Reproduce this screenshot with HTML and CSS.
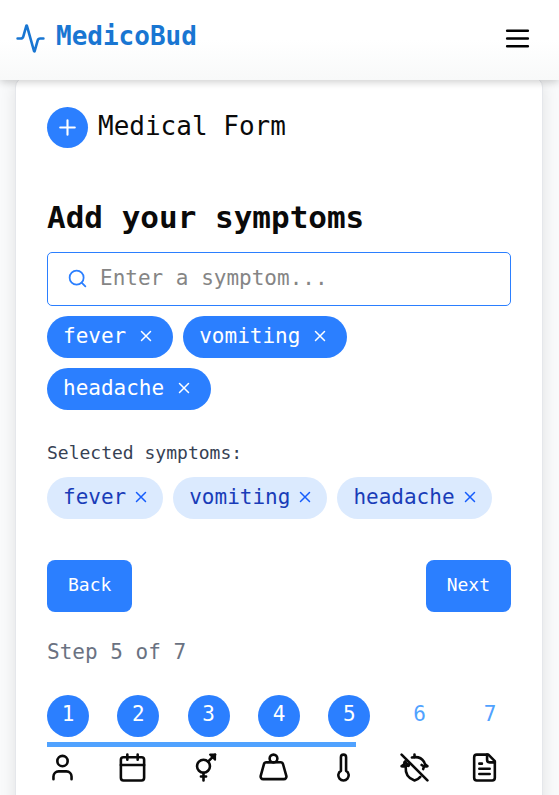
FILE: index.html
```html
<!DOCTYPE html>
<html lang="en">
<head>
<meta charset="utf-8">
<meta name="viewport" content="width=device-width, initial-scale=1">
<title>MedicoBud</title>
<link rel="stylesheet" href="styles.css">
</head>
<body>
<header class="topbar">
  <a class="brand" href="#">
    <svg class="icon brand-icon" viewBox="0 0 24 24" aria-hidden="true"><path d="M22 12h-2.500a2 2 0 0 0-1.930 1.460l-2.350 8.360a.25.25 0 0 1-.48 0L9.240 2.180a.25.25 0 0 0-.48 0l-2.350 8.360A2 2 0 0 1 4.490 12H2"/></svg>
    <span>MedicoBud</span>
  </a>
  <button class="menu-button" type="button" aria-label="Menu">
    <svg class="icon menu-icon" viewBox="0 0 24 24" aria-hidden="true"><path d="M4 6h16M4 12h16M4 18h16"/></svg>
  </button>
</header>
<main class="card">
  <div class="card-title">
    <span class="plus"><svg class="icon plus-icon" viewBox="0 0 24 24" aria-hidden="true"><path d="M5 12h14M12 5v14"/></svg></span>
    <h1>Medical Form</h1>
  </div>
  <form class="form">
    <h2><label for="symptom">Add your symptoms</label></h2>
    <div class="search">
      <svg class="icon search-icon" viewBox="0 0 24 24" aria-hidden="true"><circle cx="11" cy="11" r="8"/><path d="m21 21-4.300-4.300"/></svg>
      <input id="symptom" type="text" placeholder="Enter a symptom...">
    </div>
    <div class="chips">
      <button class="chip" type="button">fever <svg class="icon x-icon" viewBox="0 0 24 24" aria-hidden="true"><path d="M18 6 6 18M6 6l12 12"/></svg></button>
      <button class="chip" type="button">vomiting <svg class="icon x-icon" viewBox="0 0 24 24" aria-hidden="true"><path d="M18 6 6 18M6 6l12 12"/></svg></button>
      <button class="chip" type="button">headache <svg class="icon x-icon" viewBox="0 0 24 24" aria-hidden="true"><path d="M18 6 6 18M6 6l12 12"/></svg></button>
    </div>
    <p class="selected-label">Selected symptoms:</p>
    <div class="tags">
      <span class="tag">fever <button type="button" aria-label="Remove fever"><svg class="icon x-icon" viewBox="0 0 24 24" aria-hidden="true"><path d="M18 6 6 18M6 6l12 12"/></svg></button></span>
      <span class="tag">vomiting <button type="button" aria-label="Remove vomiting"><svg class="icon x-icon" viewBox="0 0 24 24" aria-hidden="true"><path d="M18 6 6 18M6 6l12 12"/></svg></button></span>
      <span class="tag">headache <button type="button" aria-label="Remove headache"><svg class="icon x-icon" viewBox="0 0 24 24" aria-hidden="true"><path d="M18 6 6 18M6 6l12 12"/></svg></button></span>
    </div>
    <div class="actions">
      <button class="action" type="button">Back</button>
      <button class="action" type="button">Next</button>
    </div>
  </form>
  <p class="step-label">Step 5 of 7</p>
  <ol class="steps">
    <li class="done">1</li><li class="done">2</li><li class="done">3</li><li class="done">4</li><li class="done">5</li><li>6</li><li>7</li>
  </ol>
  <div class="track"><div class="progress"></div></div>
  <div class="step-icons">
    <span><svg class="icon" viewBox="0 0 24 24" aria-hidden="true"><path d="M19 21v-2a4 4 0 0 0-4-4H9a4 4 0 0 0-4 4v2"/><circle cx="12" cy="7" r="4"/></svg></span>
    <span><svg class="icon" viewBox="0 0 24 24" aria-hidden="true"><path d="M8 2v4M16 2v4M3 10h18"/><rect x="3" y="4" width="18" height="18" rx="2"/></svg></span>
    <span><svg class="icon" viewBox="0 0 24 24" aria-hidden="true"><circle cx="12" cy="11" r="5"/><path d="M12 16v6M10 19h4M15.500 7.500 21 2"/><path d="M17 2h4v4Z" fill="currentColor" stroke-width="1.500"/></svg></span>
    <span><svg class="icon" viewBox="0 0 24 24" aria-hidden="true"><circle cx="12" cy="5" r="3"/><path d="M6.500 8a2 2 0 0 0-1.905 1.460L2.100 18.500A2 2 0 0 0 4 21h16a2 2 0 0 0 1.925-2.540L19.400 9.500A2 2 0 0 0 17.480 8Z"/></svg></span>
    <span><svg class="icon" viewBox="0 0 24 24" aria-hidden="true"><path d="M14 4v10.540a4 4 0 1 1-4 0V4a2 2 0 0 1 4 0Z"/></svg></span>
    <span><svg class="icon" viewBox="0 0 24 24" aria-hidden="true"><path d="M2 2l20 20M12 2v2"/><path d="M10 4.300c4-.8 7.600.4 9.300 3.200.4 1.600 1.200 2.700 2.700 3.500-1.600.4-3.200 0-4.500-1"/><path d="M19.300 11.500l-.6 1.700"/><path d="M5 7.300c-.4 1.700-1.400 2.900-3 3.700 2.200.6 4.600 0 6-1.600"/><path d="M4.500 8l2.800 2.400" stroke-width="2.500"/><path d="M5.200 11.500c-.4 5.400 2 9 6.800 10.500 1.900-.6 3.400-1.500 4.500-2.800"/></svg></span>
    <span><svg class="icon" viewBox="0 0 24 24" aria-hidden="true"><path d="M15 2H6a2 2 0 0 0-2 2v16a2 2 0 0 0 2 2h12a2 2 0 0 0 2-2V7Z"/><path d="M14 2v4a2 2 0 0 0 2 2h4M10 9H8M16 13H8M16 17H8"/></svg></span>
  </div>
</main>
</body>
</html>
```

FILE: styles.css
```css
* { box-sizing: border-box; margin: 0; padding: 0; }
body {
  background: #f9fafb;
  color: #0a0a0a;
  font-family: "DejaVu Sans Mono", "Liberation Mono", monospace;
  font-size: 21px;
  line-height: 32px;
}
button, input { font: inherit; color: inherit; border: 0; background: none; }
button { cursor: pointer; }
.icon {
  display: block;
  width: 31px;
  height: 31px;
  fill: none;
  stroke: currentColor;
  stroke-width: 2;
  stroke-linecap: round;
  stroke-linejoin: round;
}
.topbar {
  position: relative;
  display: flex;
  align-items: center;
  justify-content: space-between;
  height: 80px;
  padding: 0 26px 4px 15px;
  background: linear-gradient(#fff 50%, #f8f9f9);
  box-shadow: 0 2px 8px rgba(0, 0, 0, .2);
}
.brand {
  display: flex;
  align-items: center;
  gap: 10px;
  color: #1976d2;
  font-size: 26px;
  font-weight: 700;
  line-height: 42px;
  text-decoration: none;
}
.brand span { padding-bottom: 4px; }
.menu-icon { color: #000; }
.card {
  margin: -3px 16px 0 15px;
  padding: 29px 31px;
  background: #fff;
  border: 1px solid #e5e7eb;
  border-radius: 10px;
  box-shadow: 0 4px 16px rgba(0, 0, 0, .1);
}
.card-title { display: flex; align-items: center; gap: 10px; }
.card-title h1 { font-size: 26px; font-weight: 400; padding-bottom: 4px; }
.plus {
  display: grid;
  place-items: center;
  width: 41px;
  height: 41px;
  border-radius: 50%;
  background: #2b7fff;
  color: #fff;
}
.plus-icon { width: 25px; height: 25px; }
.form { margin-top: 48px; }
h2 { font-size: 31px; line-height: 42px; margin-bottom: 14px; }
.search {
  display: flex;
  align-items: center;
  gap: 12px;
  height: 54px;
  padding: 0 19px 2px;
  border: 1px solid #2b7fff;
  border-radius: 5px;
}
.search-icon { width: 21px; height: 21px; color: #2b7fff; }
.search input { flex: 1; min-width: 0; outline: 0; }
.search input::placeholder { color: #858585; opacity: 1; }
.chips, .tags { display: flex; flex-wrap: wrap; gap: 10px; }
.chips { max-width: 400px; margin-top: 10px; }
.chip, .tag {
  display: flex;
  align-items: center;
  height: 42px;
  border-radius: 21px;
}
.chip { gap: 11px; padding: 0 18px 2px 16px; background: #2b7fff; color: #fff; }
.x-icon { width: 18px; height: 18px; }
.selected-label { margin-top: 29px; color: #364153; font-size: 18px; line-height: 28px; }
.tags { margin-top: 10px; }
.tag { gap: 6px; padding: 0 13px 3px 16px; background: #dbeafe; color: #193cb8; }
.tag button { color: #155dfc; }
.actions { display: flex; justify-content: space-between; margin-top: 41px; }
.action {
  height: 52px;
  padding: 0 21px 2px;
  border-radius: 8px;
  background: #2b7fff;
  color: #fff;
  font-size: 18px;
}
.step-label { margin-top: 24px; color: #6a7282; }
.steps { display: flex; justify-content: space-between; margin-top: 27px; list-style: none; }
.steps li {
  width: 42px;
  height: 42px;
  padding-bottom: 4px;
  border-radius: 50%;
  color: #50a2ff;
  line-height: 38px;
  text-align: center;
}
.steps .done { background: #2b7fff; color: #fff; }
.track { margin-top: 5px; }
.progress { width: 66.6%; height: 5px; background: #50a2ff; }
.step-icons { display: flex; justify-content: space-between; margin-top: 5px; }
.step-icons span { width: 42px; }
```
